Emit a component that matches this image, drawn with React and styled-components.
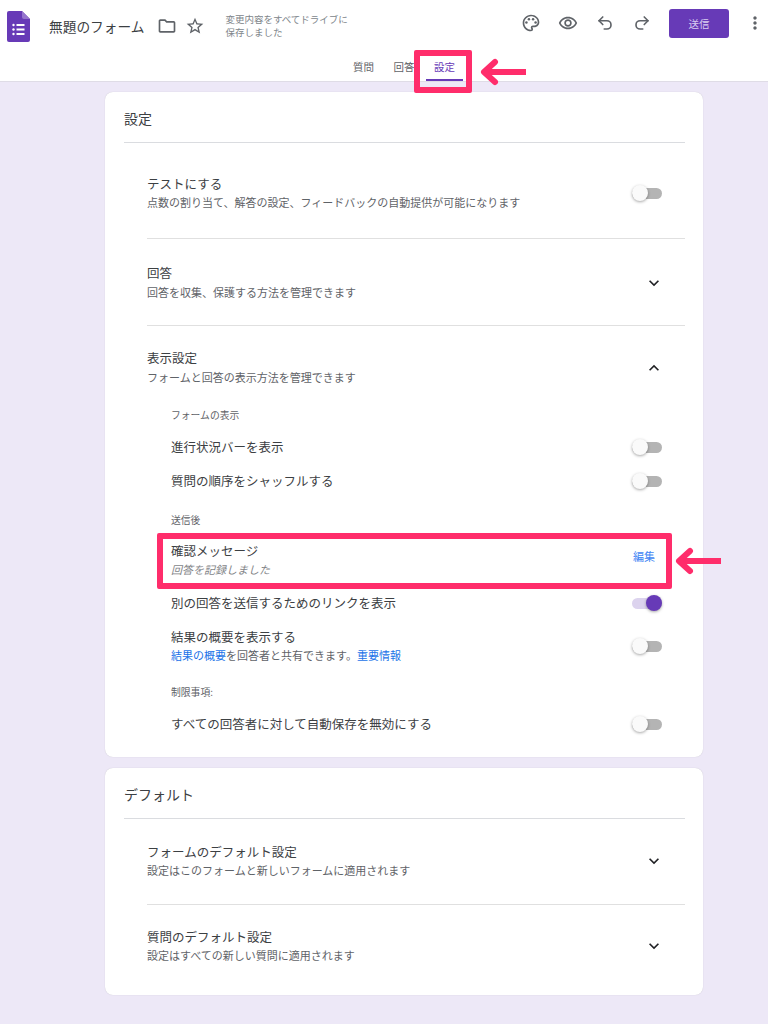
import React from 'react';
import styled, {createGlobalStyle} from 'styled-components';
import {
    MdOutlineFolder, MdStarBorder, MdOutlinePalette, MdOutlineRemoveRedEye,
    MdMoreVert, MdExpandMore, MdExpandLess
} from 'react-icons/md';
import {Undo2, Redo2} from 'lucide-react';

const GlobalStyle = createGlobalStyle`
body {
  margin: 0;
  background: #ede8f7;
  font-family: "Noto Sans CJK JP", "Noto Sans", sans-serif;
  color: #3c4043;
}
`;

const Page = styled.div`
position: relative;
width: 768px;
height: 1024px;
overflow: hidden;
`;

const Header = styled.header`
height: 82px;
box-sizing: border-box;
background: #fff;
border-bottom: 1px solid #dfdce6;
`;

const TopRow = styled.div`
display: flex;
align-items: center;
height: 46px;
padding: 0 3px 0 7px;
`;

const LeftGroup = styled.div`
display: flex;
align-items: center;
margin-top: 6px;
`;

const Title = styled.h1`
margin: 0 13px 0 19px;
font-size: 13.7px;
font-weight: 400;
line-height: 20px;
white-space: nowrap;
`;

const IconSlot = styled.span`
display: flex;
align-items: center;
justify-content: center;
width: 20px;
height: 20px;
font-size: 20px;
color: #5f6368;
margin-right: ${p => p.$gap || 0}px;
`;

const SavedNote = styled.div`
margin-left: 20px;
font-size: 9.5px;
line-height: 13px;
color: #80868b;
white-space: nowrap;
`;

const RightGroup = styled.div`
display: flex;
align-items: center;
gap: 17px;
margin-left: auto;
`;

const SendButton = styled.button`
width: 60px;
height: 29px;
margin-right: -1px;
border: 0;
border-radius: 3px;
background: #673ab7;
color: #d9cdf0;
font: inherit;
font-size: 10.5px;
`;

const Tabs = styled.nav`
display: flex;
gap: 3.5px;
padding-left: 345px;
`;

const Tab = styled.div`
width: 37px;
height: 35px;
box-sizing: border-box;
padding-top: 12px;
text-align: center;
font-size: 10.5px;
line-height: 18px;
color: ${p => (p.$active ? '#673ab7' : '#5f6368')};
border-bottom: 2px solid ${p => (p.$active ? '#673ab7' : 'transparent')};
`;

const Main = styled.main`
display: flex;
flex-direction: column;
gap: 11px;
padding: 10px 0 0 105px;
`;

const Card = styled.section`
width: 598px;
box-sizing: border-box;
padding: 0 18px 0 19px;
background: #fff;
border-radius: 8px;
box-shadow: 0 0 1px rgba(0, 0, 0, 0.2);
`;

const CardTitle = styled.h2`
height: 51px;
box-sizing: border-box;
margin: 0;
padding-top: 15px;
border-bottom: 1px solid #dadce0;
font-size: 14px;
font-weight: 400;
line-height: 22px;
`;

const Section = styled.div`
margin-left: 23px;
padding: ${p => p.$top}px 23px ${p => p.$bottom}px 0;
border-bottom: ${p => (p.$last ? '0' : '1px solid #e0e0e0')};
`;

const SectionHead = styled.div`
display: flex;
align-items: center;
justify-content: space-between;
`;

const RowTitle = styled.div`
font-size: 12.5px;
line-height: 18px;
color: #3c4043;
`;

const RowSub = styled.div`
margin-top: ${p => p.$gap || 0}px;
font-size: 11px;
line-height: 18px;
color: #5f6368;
font-style: ${p => (p.$italic ? 'italic' : 'normal')};
opacity: ${p => (p.$italic ? 0.8 : 1)};
`;

const Chevron = styled.span`
display: flex;
font-size: 20px;
color: #202124;
margin-right: -2px;
`;

const Options = styled.div`
padding-left: 24px;
`;

const GroupLabel = styled.div`
height: 16px;
margin-top: ${p => p.$top}px;
font-size: 9.8px;
line-height: 16px;
color: #5f6368;
`;

const OptionRow = styled.div`
display: flex;
align-items: center;
justify-content: space-between;
min-height: ${p => p.$height || 34}px;
margin-top: ${p => p.$top || 0}px;
`;

const EditLink = styled.a`
align-self: flex-start;
margin: 5px 7px 0 0;
font-size: 11px;
line-height: 18px;
color: #4285f4;
`;

const BlueText = styled.span`
color: #1a73e8;
`;

const ToggleTrack = styled.span`
position: relative;
flex: none;
display: block;
width: 30px;
height: 11px;
border-radius: 6px;
background: ${p => (p.$on ? '#dcd3ee' : '#b4b4b4')};
`;

const ToggleKnob = styled.span`
position: absolute;
top: -3px;
left: ${p => (p.$on ? '14px' : '0')};
width: 16px;
height: 16px;
border-radius: 50%;
background: ${p => (p.$on ? '#673ab7' : '#fafafa')};
box-shadow: 0 1px 3px rgba(0, 0, 0, 0.35);
`;

const Highlight = styled.div`
position: absolute;
box-sizing: border-box;
border: 6px solid #ff2d6b;
border-radius: 2px;
left: ${p => p.$x}px;
top: ${p => p.$y}px;
width: ${p => p.$w}px;
height: ${p => p.$h}px;
`;

const ArrowMark = styled.svg`
position: absolute;
left: ${p => p.$x}px;
top: ${p => p.$y}px;
`;

const Toggle = ({on}) => (
    <ToggleTrack $on={on}>
        <ToggleKnob $on={on}/>
    </ToggleTrack>
);

const FormsLogo = () => (
    <svg width="23" height="31" viewBox="0 0 23 31">
        <path d="M2 0H15L23 8V29a2 2 0 0 1-2 2H2a2 2 0 0 1-2-2V2A2 2 0 0 1 2 0Z" fill="#673ab7"/>
        <path d="M15 0L23 8H17a2 2 0 0 1-2-2Z" fill="#9575cd"/>
        <g fill="#fff">
            <circle cx="6.5" cy="14" r="1.2"/>
            <circle cx="6.5" cy="18.5" r="1.2"/>
            <circle cx="6.5" cy="23" r="1.2"/>
            <rect x="9.5" y="13" width="8" height="2"/>
            <rect x="9.5" y="17.5" width="8" height="2"/>
            <rect x="9.5" y="22" width="8" height="2"/>
        </g>
    </svg>
);

const Arrow = ({x, y}) => (
    <ArrowMark $x={x} $y={y} width="46" height="28" viewBox="0 0 46 28">
        <path d="M46 14H5" fill="none" stroke="#ff2d6b" strokeWidth="6"/>
        <path d="M15 4L4 14L15 24" fill="none" stroke="#ff2d6b" strokeWidth="6" strokeLinejoin="round" strokeLinecap="round"/>
    </ArrowMark>
);

const App = () => (
    <Page>
        <GlobalStyle/>
        <Header>
            <TopRow>
                <LeftGroup>
                    <FormsLogo/>
                    <Title>無題のフォーム</Title>
                    <IconSlot $gap={8}><MdOutlineFolder/></IconSlot>
                    <IconSlot><MdStarBorder/></IconSlot>
                    <SavedNote>変更内容をすべてドライブに<br/>保存しました</SavedNote>
                </LeftGroup>
                <RightGroup>
                    <IconSlot><MdOutlinePalette/></IconSlot>
                    <IconSlot><MdOutlineRemoveRedEye/></IconSlot>
                    <IconSlot><Undo2 size={18} strokeWidth={2.2}/></IconSlot>
                    <IconSlot><Redo2 size={18} strokeWidth={2.2}/></IconSlot>
                    <SendButton>送信</SendButton>
                    <IconSlot><MdMoreVert/></IconSlot>
                </RightGroup>
            </TopRow>
            <Tabs>
                <Tab>質問</Tab>
                <Tab>回答</Tab>
                <Tab $active>設定</Tab>
            </Tabs>
        </Header>

        <Main>
            <Card>
                <CardTitle>設定</CardTitle>
                <Section $top={32} $bottom={27}>
                    <SectionHead>
                        <div>
                            <RowTitle>テストにする</RowTitle>
                            <RowSub>点数の割り当て、解答の設定、フィードバックの自動提供が可能になります</RowSub>
                        </div>
                        <Toggle/>
                    </SectionHead>
                </Section>
                <Section $top={25} $bottom={24}>
                    <SectionHead>
                        <div>
                            <RowTitle>回答</RowTitle>
                            <RowSub $gap={1}>回答を収集、保護する方法を管理できます</RowSub>
                        </div>
                        <Chevron><MdExpandMore/></Chevron>
                    </SectionHead>
                </Section>
                <Section $top={23} $bottom={16} $last>
                    <SectionHead>
                        <div>
                            <RowTitle>表示設定</RowTitle>
                            <RowSub $gap={1}>フォームと回答の表示方法を管理できます</RowSub>
                        </div>
                        <Chevron><MdExpandLess/></Chevron>
                    </SectionHead>
                    <Options>
                        <GroupLabel $top={21}>フォームの表示</GroupLabel>
                        <OptionRow $top={7}>
                            <RowTitle>進行状況バーを表示</RowTitle>
                            <Toggle/>
                        </OptionRow>
                        <OptionRow>
                            <RowTitle>質問の順序をシャッフルする</RowTitle>
                            <Toggle/>
                        </OptionRow>
                        <GroupLabel $top={14}>送信後</GroupLabel>
                        <OptionRow $top={14} $height={36}>
                            <div>
                                <RowTitle>確認メッセージ</RowTitle>
                                <RowSub $italic>回答を記録しました</RowSub>
                            </div>
                            <EditLink>編集</EditLink>
                        </OptionRow>
                        <OptionRow $top={8}>
                            <RowTitle>別の回答を送信するためのリンクを表示</RowTitle>
                            <Toggle on/>
                        </OptionRow>
                        <OptionRow $top={8} $height={36}>
                            <div>
                                <RowTitle>結果の概要を表示する</RowTitle>
                                <RowSub><BlueText>結果の概要</BlueText>を回答者と共有できます。<BlueText>重要情報</BlueText></RowSub>
                            </div>
                            <Toggle/>
                        </OptionRow>
                        <GroupLabel $top={20}>制限事項:</GroupLabel>
                        <OptionRow $top={7}>
                            <RowTitle>すべての回答者に対して自動保存を無効にする</RowTitle>
                            <Toggle/>
                        </OptionRow>
                    </Options>
                </Section>
            </Card>

            <Card>
                <CardTitle>デフォルト</CardTitle>
                <Section $top={24} $bottom={25}>
                    <SectionHead>
                        <div>
                            <RowTitle>フォームのデフォルト設定</RowTitle>
                            <RowSub>設定はこのフォームと新しいフォームに適用されます</RowSub>
                        </div>
                        <Chevron><MdExpandMore/></Chevron>
                    </SectionHead>
                </Section>
                <Section $top={23} $bottom={31} $last>
                    <SectionHead>
                        <div>
                            <RowTitle>質問のデフォルト設定</RowTitle>
                            <RowSub>設定はすべての新しい質問に適用されます</RowSub>
                        </div>
                        <Chevron><MdExpandMore/></Chevron>
                    </SectionHead>
                </Section>
            </Card>
        </Main>

        <Highlight $x={414} $y={50} $w={58} $h={43}/>
        <Arrow x={480} y={58}/>
        <Highlight $x={157} $y={533} $w={515} $h={56}/>
        <Arrow x={675} y={547}/>
    </Page>
);

export default App;
